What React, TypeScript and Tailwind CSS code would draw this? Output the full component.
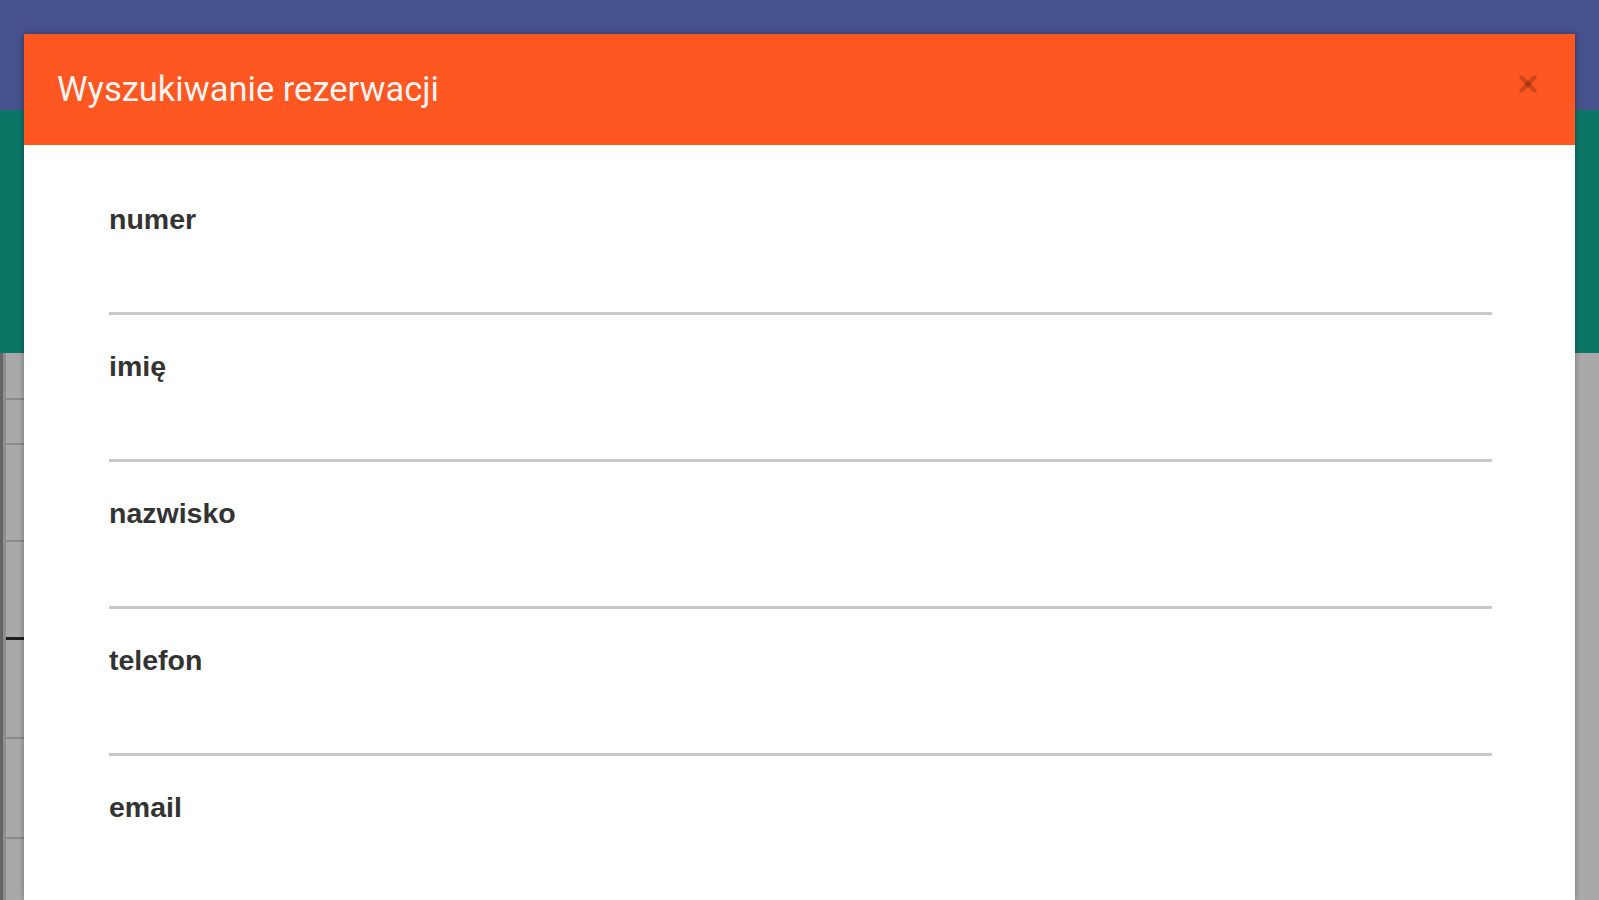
import { X } from "lucide-react";

const fields = ["numer", "imię", "nazwisko", "telefon", "email"];

// background rows of the page behind the dialog
const rows = [45, 45, 97, 97, 100, 100, 100];

export default function App() {
  return (
    <div className="relative h-[900px] w-full overflow-hidden bg-[#a9a9a9]">
      {/* Page behind the overlay */}
      <div className="flex h-full flex-col">
        <div className="h-[110px] shrink-0 bg-[#45528c]" />
        <div className="h-[243px] shrink-0 bg-[#0b7566]" />
        <div className="flex flex-1">
          <div className="w-[3px] bg-[#656565]" />
          <div className="w-[3px] bg-[#8e8e8e]" />
          <div className="flex w-[18px] flex-col">
            {rows.map((h, i) => (
              <div
                key={i}
                style={{ height: h }}
                className={
                  i === 4
                    ? "shrink-0 border-t-[3px] border-[#1e1e1e]"
                    : i === 0
                      ? "shrink-0"
                      : "shrink-0 border-t-2 border-[#8a8a8a]"
                }
              />
            ))}
          </div>
          <div className="flex-1" />
        </div>
      </div>

      {/* Dialog */}
      <div className="absolute left-[24px] right-[24px] top-[34px] bottom-0 flex flex-col overflow-hidden bg-white shadow-[0_0_6px_rgba(0,0,0,0.35)]">
        <div className="flex h-[111px] shrink-0 items-center justify-between bg-[#ff5722] pl-[33px] pr-[34px]">
          <h1 className="font-['Roboto',sans-serif] text-[34.5px] font-normal leading-none text-white/95">
            Wyszukiwanie rezerwacji
          </h1>
          <X className="mb-[12px] h-[26px] w-[26px] text-black/20" strokeWidth={4} />
        </div>

        <div className="flex shrink-0 flex-col pl-[85px] pr-[83px] pt-[58px]">
          {fields.map((f) => (
            <div key={f} className="mb-[35px] flex shrink-0 flex-col">
              <label className="font-['Liberation_Sans',Arial,sans-serif] text-[28.5px] font-bold leading-[32px] text-[#333333]">
                {f}
              </label>
              <div className="h-[80px] border-b-[3px] border-[#c9c9c9]" />
            </div>
          ))}
        </div>
      </div>
    </div>
  );
}
